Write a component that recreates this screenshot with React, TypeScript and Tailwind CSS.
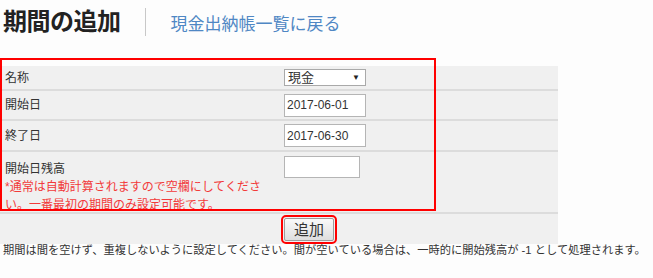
const jp = "font-['Liberation_Sans','Noto_Sans_CJK_JP',sans-serif]";

function Row({
  label,
  children,
  className = "",
}: {
  label: React.ReactNode;
  children: React.ReactNode;
  className?: string;
}) {
  return (
    <div className={`flex border-b-2 border-[#dcdcdc] ${className}`}>
      <div className="w-[284px] shrink-0 pl-[5px] pr-[14px] text-[12px] text-[#333]">{label}</div>
      <div className="flex-1">{children}</div>
    </div>
  );
}

export default function App() {
  return (
    <div className={`relative w-[653px] h-[278px] bg-[#fdfdfd] ${jp}`}>
      {/* header */}
      <div className="flex items-center h-[58px] pb-[14px]">
        <h1 className="pl-[3px] text-[24px] font-bold text-[#222] leading-none tracking-[-0.5px]">期間の追加</h1>
        <div className="ml-[24px] w-px h-[28px] bg-[#c8c8c8]" />
        <a className="ml-[25px] mt-[4px] text-[17px] text-[#4f87c4] leading-none">現金出納帳一覧に戻る</a>
      </div>

      <div className="h-[8px]" />

      {/* form table */}
      <div className="w-[558px] bg-[#f0f0f0]">
        <Row label="名称" className="h-[25px] items-center">
          <div className="flex items-center justify-between w-[82px] h-[17px] border border-[#a9a9a9] bg-white pl-[3px] pr-[5px] text-[13px] text-[#333] leading-none">
            <span>現金</span>
            <span className="text-[8px] text-[#222]">▼</span>
          </div>
        </Row>
        <Row label="開始日" className="h-[30px] items-center">
          <input
            readOnly
            value="2017-06-01"
            className="block w-[82px] h-[23px] border border-[#b5b5b5] bg-white px-[2px] text-[12px] text-[#333] outline-none"
          />
        </Row>
        <Row label="終了日" className="h-[31px] items-center">
          <input
            readOnly
            value="2017-06-30"
            className="block w-[82px] h-[23px] border border-[#b5b5b5] bg-white px-[2px] text-[12px] text-[#333] outline-none"
          />
        </Row>
        <Row
          className="h-[62px] pt-[4px]"
          label={
            <div className="pt-[4px] leading-[18px]">
              <div>開始日残高</div>
              <div className="text-[#f23a3a]">*通常は自動計算されますので空欄にしてください。一番最初の期間のみ設定可能です。</div>
            </div>
          }
        >
          <input
            readOnly
            value=""
            className="block w-[76px] h-[22px] border border-[#b5b5b5] bg-white outline-none"
          />
        </Row>
        <div className="flex h-[30px] items-end">
          <div className="w-[281px] shrink-0" />
          <div className="rounded-[5px] border-2 border-[#ff0000] p-px">
            <button className="block w-[50px] h-[23px] rounded-[2px] border border-[#9c9c9c] bg-gradient-to-b from-[#fafafa] to-[#dedede] text-[15px] text-[#333] leading-none">
              追加
            </button>
          </div>
        </div>
      </div>

      <p className="pl-[3px] text-[11.25px] text-[#333] leading-[13px] whitespace-nowrap">
        期間は間を空けず、重複しないように設定してください。間が空いている場合は、一時的に開始残高が -1 として処理されます。
      </p>

      {/* annotation frame */}
      <div className="absolute left-0 top-[58px] w-[436px] h-[153px] border-2 border-[#ff0000] pointer-events-none" />
    </div>
  );
}
